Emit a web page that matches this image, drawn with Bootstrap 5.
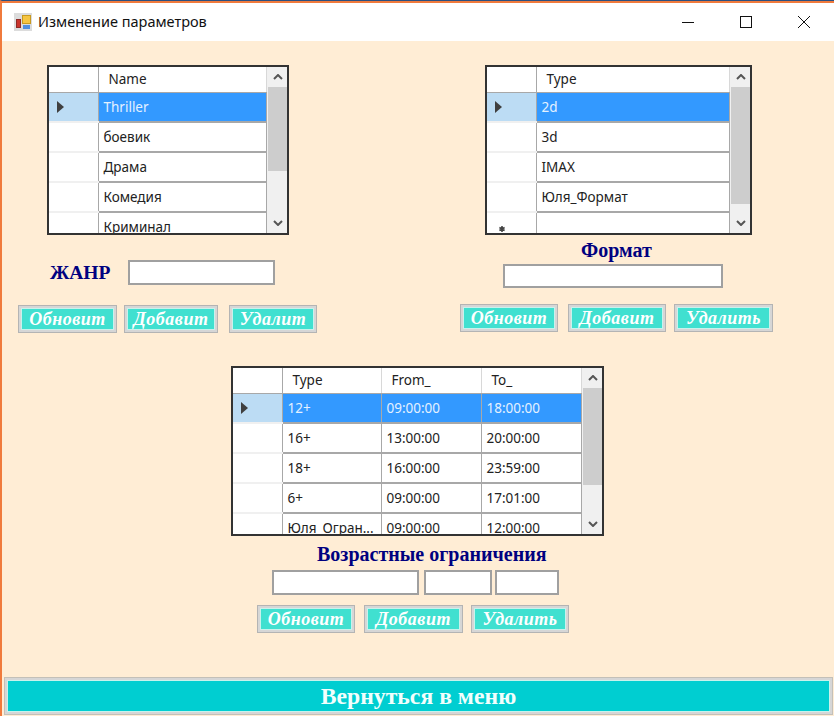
<!DOCTYPE html>
<html lang="ru">

<head>
    <meta charset="UTF-8">
    <meta name="viewport" content="width=device-width, initial-scale=1.0">
    <title>Изменение параметров</title>
    <link href="https://cdn.jsdelivr.net/npm/bootstrap@5.3.0/dist/css/bootstrap.min.css" rel="stylesheet">
    <style>
        html, body {
            height: 716px;
            overflow: hidden;
        }

        body {
            background-color: #ffedd5;
            font-family: "Noto Sans", sans-serif;
        }

        .win-frame {
            height: 716px;
            border-top: 1px solid #2b4f80;
            border-left: 2px solid #f07a3c;
        }

        .win-title {
            height: 40px;
            border-top: 2px solid #f07a3c;
            background-color: #fff;
            padding-left: 12px;
            font-size: 14.5px;
            color: #111;
        }

        .win-title-text {
            margin-left: 6px;
        }

        .win-ctrl {
            width: 12px;
            height: 12px;
            display: block;
        }

        .win-ctrls {
            gap: 46px;
            padding-right: 24px;
        }

        .win-body {
            padding-top: 24px;
        }

        .block-left {
            margin-left: 16px;
            width: 300px;
        }

        .block-right {
            margin-right: 61px;
            width: 313px;
        }

        .grid-box {
            height: 170px;
            border: 2px solid #333;
            background-color: #fff;
            overflow: hidden;
        }

        .grid-a {
            width: 242px;
            margin-left: 29px;
        }

        .grid-b {
            width: 267px;
            margin-left: 25px;
        }

        .grid-c {
            width: 373px;
        }

        .col-head {
            width: 49px;
        }

        .col-type {
            width: 99px;
        }

        .col-from {
            width: 100px;
        }

        .grid-table {
            table-layout: fixed;
            font-size: 13.5px;
            color: #222;
            --bs-table-bg: #fff;
        }

        .grid-table th,
        .grid-table td {
            padding: 0 0 0 5px;
            white-space: nowrap;
            overflow: hidden;
            box-shadow: none;
            vertical-align: middle;
        }

        .grid-table th {
            height: 25px;
            padding-left: 10px;
            font-weight: 400;
            border-right: 1px solid #d8d8d8;
            border-bottom: 1px solid #a8a8a8;
        }

        .grid-table td {
            height: 30px;
            border-right: 1px solid #a8a8a8;
            border-bottom: 2px solid #a8a8a8;
        }

        .grid-table .row-head {
            padding: 0 0 0 8px;
            border-right: 1px solid #a8a8a8;
            border-bottom: 2px solid #f0f0f0;
        }

        .grid-table th.row-head {
            border-bottom: 1px solid #a8a8a8;
        }

        .grid-table td.row-head-on {
            background-color: #bcdcf4;
        }

        .grid-table td.cell-on {
            background-color: #3399ff;
            color: #e4f1ff;
            border-bottom-color: #a8a8a8;
        }

        .grid-table td.row-new-cell {
            vertical-align: top;
        }

        .row-arrow {
            display: block;
            width: 0;
            height: 0;
            border-top: 6px solid transparent;
            border-bottom: 6px solid transparent;
            border-left: 7px solid #3f3f3f;
        }

        .row-new {
            display: block;
            margin: 13px 0 0 4px;
        }

        .grid-scroll {
            width: 20px;
            background-color: #f0f0f0;
            border-left: 1px solid #f0f0f0;
        }

        .scroll-btn {
            height: 20px;
            color: #555;
        }

        .scroll-thumb {
            background-color: #cdcdcd;
        }

        .thumb-a {
            height: 84px;
        }

        .thumb-b {
            height: 117px;
        }

        .thumb-c {
            height: 97px;
        }

        .form-label-navy {
            font-family: "Liberation Serif", serif;
            font-weight: 700;
            color: #000080;
            font-size: 20px;
            line-height: 20px;
        }

        .genre-row {
            margin-top: 25px;
            margin-left: 32px;
            gap: 18px;
        }

        .genre-label {
            font-size: 19.5px;
        }

        .win-input {
            height: 25px;
            padding: 0 4px;
            border: 2px solid #a0a0a0;
            border-radius: 0;
            background-color: #fff;
        }

        .act-btns {
            margin-top: 20px;
        }

        .act-btn {
            height: 28px;
            padding: 0;
            border: 1px solid #b4b4b4;
            border-radius: 0;
            background-color: #40e0d0;
            box-shadow: inset 0 0 0 2px #d6d6d6, inset 0 0 0 3px #c8f2ec;
            color: #fff;
            font-family: "Liberation Serif", serif;
            font-style: italic;
            font-weight: 700;
            font-size: 18px;
            line-height: 24px;
            letter-spacing: 0.5px;
        }

        .btn.act-btn:hover {
            background-color: #40e0d0;
            color: #fff;
        }

        .menu-btn {
            display: block;
            margin: 44px 0 0 2px;
            width: 829px;
            height: 38px;
            padding: 0;
            border: 1px solid #c4c0b8;
            border-radius: 0;
            background-color: #00ced1;
            box-shadow: inset 0 0 0 2px #d6d6d6, inset 0 0 0 3px #c8f2ec;
            color: #f2fffd;
            font-family: "Liberation Serif", serif;
            font-weight: 700;
            font-size: 23.7px;
            line-height: 32px;
        }

        .btn.menu-btn:hover {
            background-color: #00ced1;
            color: #f2fffd;
        }

        .genre-input { width: 147px; }
        .btn-a1 { width: 99px; }
        .btn-a2 { width: 94px; margin-left: 7px; }
        .btn-a3 { width: 88px; margin-left: 11px; }

        .format-head { margin-top: 5px; width: 313px; }
        .format-input { width: 220px; margin: 4px 0 0 43px; height: 24px; }
        .format-btns { margin-top: 16px; }
        .btn-b1 { width: 98px; }
        .btn-b2 { width: 98px; margin-left: 10px; }
        .btn-b3 { width: 99px; margin-left: 8px; }

        .block-age { margin: 33px 0 0 229px; width: 380px; }
        .age-head { margin: 8px 0 0 86px; }
        .age-inputs { margin: 6px 0 0 41px; }
        .age-in1 { width: 147px; }
        .age-in2 { width: 68px; margin-left: 5px; }
        .age-in3 { width: 64px; margin-left: 3px; }
        .age-btns { margin: 10px 0 0 26px; }
        .btn-c1 { width: 98px; }
        .btn-c2 { width: 99px; margin-left: 9px; }
        .btn-c3 { width: 98px; margin-left: 8px; }
    </style>
</head>

<body>
    <div class="win-frame">
        <div class="win-title d-flex align-items-center">
            <svg width="18" height="18" viewBox="0 0 18 18">
                <rect width="18" height="18" fill="#dcdcdc" />
                <rect x="8.5" y="2.5" width="8" height="8" fill="#f5c542" stroke="#c89a20" />
                <rect x="2.5" y="6.5" width="4" height="8" fill="#c9342c" stroke="#8e2a26" />
                <rect x="9" y="12" width="7" height="4" fill="#4f8fe0" />
            </svg>
            <span class="win-title-text flex-grow-1">Изменение параметров</span>
            <div class="win-ctrls d-flex align-items-center">
                <svg class="win-ctrl" viewBox="0 0 12 12"><path d="M0 6.5H12" stroke="#111" fill="none" /></svg>
                <svg class="win-ctrl" viewBox="0 0 12 12"><rect x="0.5" y="0.5" width="11" height="11" stroke="#111" fill="none" /></svg>
                <svg class="win-ctrl" viewBox="0 0 12 12"><path d="M0 0L12 12M12 0L0 12" stroke="#111" fill="none" /></svg>
            </div>
        </div>

        <div class="win-body">
            <div class="d-flex justify-content-between">
                <!-- жанры -->
                <div class="block-left">
                    <div class="grid-box grid-a d-flex">
                        <table class="table grid-table mb-0 flex-grow-1">
                            <colgroup>
                                <col class="col-head">
                                <col>
                            </colgroup>
                            <thead>
                                <tr><th class="row-head"></th><th>Name</th></tr>
                            </thead>
                            <tbody>
                                <tr><td class="row-head row-head-on"><span class="row-arrow"></span></td><td class="cell-on">Thriller</td></tr>
                                <tr><td class="row-head"></td><td>боевик</td></tr>
                                <tr><td class="row-head"></td><td>Драма</td></tr>
                                <tr><td class="row-head"></td><td>Комедия</td></tr>
                                <tr><td class="row-head"></td><td>Криминал</td></tr>
                            </tbody>
                        </table>
                        <div class="grid-scroll flex-shrink-0 d-flex flex-column">
                            <div class="scroll-btn d-flex align-items-center justify-content-center"><svg width="10" height="6" viewBox="0 0 10 6"><path d="M1 5L5 1L9 5" fill="none" stroke="currentColor" stroke-width="2" /></svg></div>
                            <div class="scroll-thumb thumb-a"></div>
                            <div class="flex-grow-1"></div>
                            <div class="scroll-btn d-flex align-items-center justify-content-center"><svg width="10" height="6" viewBox="0 0 10 6"><path d="M1 1L5 5L9 1" fill="none" stroke="currentColor" stroke-width="2" /></svg></div>
                        </div>
                    </div>
                    <div class="genre-row d-flex align-items-center">
                        <span class="form-label-navy genre-label">ЖАНР</span>
                        <input type="text" class="form-control win-input genre-input">
                    </div>
                    <div class="act-btns d-flex">
                        <button class="btn act-btn btn-a1">Обновит</button>
                        <button class="btn act-btn btn-a2">Добавит</button>
                        <button class="btn act-btn btn-a3">Удалит</button>
                    </div>
                </div>

                <!-- форматы -->
                <div class="block-right">
                    <div class="grid-box grid-b d-flex">
                        <table class="table grid-table mb-0 flex-grow-1">
                            <colgroup>
                                <col class="col-head">
                                <col>
                            </colgroup>
                            <thead>
                                <tr><th class="row-head"></th><th>Type</th></tr>
                            </thead>
                            <tbody>
                                <tr><td class="row-head row-head-on"><span class="row-arrow"></span></td><td class="cell-on">2d</td></tr>
                                <tr><td class="row-head"></td><td>3d</td></tr>
                                <tr><td class="row-head"></td><td>IMAX</td></tr>
                                <tr><td class="row-head"></td><td>Юля_Формат</td></tr>
                                <tr><td class="row-head row-new-cell"><svg class="row-new" width="6" height="6" viewBox="0 0 6 6"><path d="M3 0V6M0.4 1.5L5.6 4.5M5.6 1.5L0.4 4.5" stroke="#444" stroke-width="1.6" fill="none" /></svg></td><td></td></tr>
                            </tbody>
                        </table>
                        <div class="grid-scroll flex-shrink-0 d-flex flex-column">
                            <div class="scroll-btn d-flex align-items-center justify-content-center"><svg width="10" height="6" viewBox="0 0 10 6"><path d="M1 5L5 1L9 5" fill="none" stroke="currentColor" stroke-width="2" /></svg></div>
                            <div class="scroll-thumb thumb-b"></div>
                            <div class="flex-grow-1"></div>
                            <div class="scroll-btn d-flex align-items-center justify-content-center"><svg width="10" height="6" viewBox="0 0 10 6"><path d="M1 1L5 5L9 1" fill="none" stroke="currentColor" stroke-width="2" /></svg></div>
                        </div>
                    </div>
                    <div class="format-head text-center form-label-navy">Формат</div>
                    <input type="text" class="form-control win-input format-input">
                    <div class="act-btns format-btns d-flex">
                        <button class="btn act-btn btn-b1">Обновит</button>
                        <button class="btn act-btn btn-b2">Добавит</button>
                        <button class="btn act-btn btn-b3">Удалить</button>
                    </div>
                </div>
            </div>

            <!-- возрастные ограничения -->
            <div class="block-age">
                <div class="grid-box grid-c d-flex">
                    <table class="table grid-table mb-0 flex-grow-1">
                        <colgroup>
                            <col class="col-head">
                            <col class="col-type">
                            <col class="col-from">
                            <col>
                        </colgroup>
                        <thead>
                            <tr><th class="row-head"></th><th>Type</th><th>From_</th><th>To_</th></tr>
                        </thead>
                        <tbody>
                            <tr><td class="row-head row-head-on"><span class="row-arrow"></span></td><td class="cell-on">12+</td><td class="cell-on">09:00:00</td><td class="cell-on">18:00:00</td></tr>
                            <tr><td class="row-head"></td><td>16+</td><td>13:00:00</td><td>20:00:00</td></tr>
                            <tr><td class="row-head"></td><td>18+</td><td>16:00:00</td><td>23:59:00</td></tr>
                            <tr><td class="row-head"></td><td>6+</td><td>09:00:00</td><td>17:01:00</td></tr>
                            <tr><td class="row-head"></td><td>Юля_Огран...</td><td>09:00:00</td><td>12:00:00</td></tr>
                        </tbody>
                    </table>
                    <div class="grid-scroll flex-shrink-0 d-flex flex-column">
                        <div class="scroll-btn d-flex align-items-center justify-content-center"><svg width="10" height="6" viewBox="0 0 10 6"><path d="M1 5L5 1L9 5" fill="none" stroke="currentColor" stroke-width="2" /></svg></div>
                        <div class="scroll-thumb thumb-c"></div>
                        <div class="flex-grow-1"></div>
                        <div class="scroll-btn d-flex align-items-center justify-content-center"><svg width="10" height="6" viewBox="0 0 10 6"><path d="M1 1L5 5L9 1" fill="none" stroke="currentColor" stroke-width="2" /></svg></div>
                    </div>
                </div>
                <div class="age-head form-label-navy">Возрастные ограничения</div>
                <div class="age-inputs d-flex">
                    <input type="text" class="form-control win-input age-in1">
                    <input type="text" class="form-control win-input age-in2">
                    <input type="text" class="form-control win-input age-in3">
                </div>
                <div class="age-btns d-flex">
                    <button class="btn act-btn btn-c1">Обновит</button>
                    <button class="btn act-btn btn-c2">Добавит</button>
                    <button class="btn act-btn btn-c3">Удалить</button>
                </div>
            </div>

            <button class="btn menu-btn">Вернуться в меню</button>
        </div>
    </div>

    <script src="https://cdn.jsdelivr.net/npm/bootstrap@5.3.0/dist/js/bootstrap.bundle.min.js"></script>
</body>

</html>
